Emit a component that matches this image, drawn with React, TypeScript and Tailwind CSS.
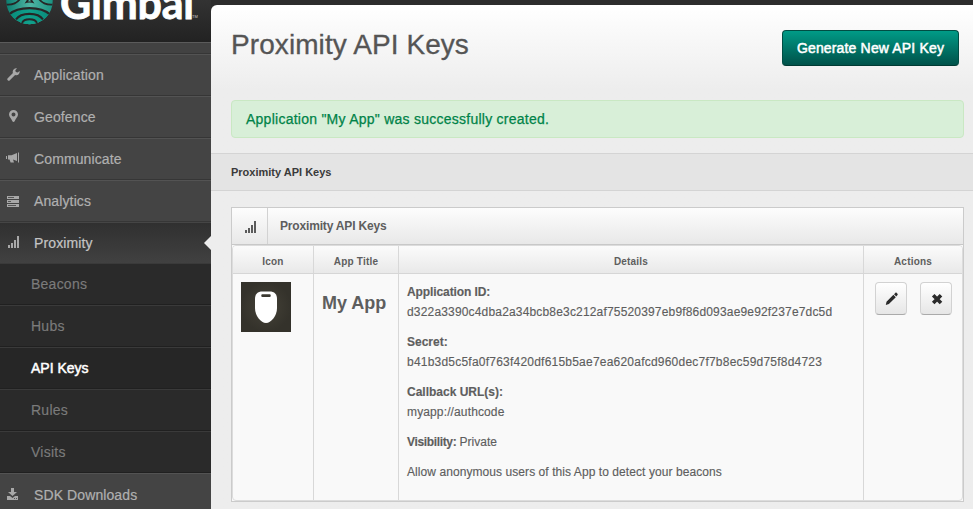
import type { ReactNode } from "react";

function Wrench() {
  return (
    <svg width="13" height="13" viewBox="0 0 13 13" fill="none">
      <path d="M1.800 11.200 7 6" stroke="#a8a8a8" strokeWidth="3" strokeLinecap="round" />
      <path d="M10 .3 8.300 2.200l.5 1.900 1.900.5L12.600 2.900c.5 2.200-1 4.300-3.300 4.300C7 7.200 5.500 5.500 5.700 3.600 5.900 1.400 8 -.3 10 .3Z" fill="#a8a8a8" />
    </svg>
  );
}

function Pin() {
  return (
    <svg width="12" height="14" viewBox="0 0 12 14">
      <path fillRule="evenodd" d="M6.500 1A4.500 4.500 0 0 1 11 5.500C11 8 8.500 9.500 7.600 12.300c-.4 1-1.800 1-2.200 0C4.500 9.500 2 8 2 5.500A4.500 4.500 0 0 1 6.500 1Zm0 2.500a2 2 0 1 0 0 4 2 2 0 0 0 0-4Z" fill="#a8a8a8" />
    </svg>
  );
}

function Megaphone() {
  return (
    <svg width="14" height="12" viewBox="0 0 14 12" fill="#a8a8a8" className="-ml-px">
      <path d="M0 4h1v3H0zM2 3.300h3.500L11 1v8L7 7.600l1 2.900H4.600L3.500 7.500H2zM12 .5h1v10h-1z" />
    </svg>
  );
}

function Servers() {
  return (
    <svg width="12" height="12" viewBox="0 0 12 12" className="mt-1">
      <path d="M0 0h12v3H0zM0 4h12v3H0zM0 8h12v3H0z" fill="#a8a8a8" />
      <path d="M1 1h6v1H1zM1 5h3v1H1zM1 9h8v1H1z" fill="#555" />
    </svg>
  );
}

function Bars({ color }: { color: string }) {
  return (
    <svg width="12" height="12" viewBox="0 0 12 12" fill={color}>
      <path d="M1 9h2v3H1zM4 7h2v5H4zM7 4h2v8H7zM10 0h2v12h-2z" />
    </svg>
  );
}

function Download() {
  return (
    <svg width="12" height="12" viewBox="0 0 12 12">
      <path d="M4 0h3v4h3L5.500 8 1 4h3zM0 8h3l2.500 2L8 8h3v4H0z" fill="#a8a8a8" />
      <path d="M7 10h1v1H7zM9 10h1v1H9z" fill="#555" />
    </svg>
  );
}

function Pencil() {
  return (
    <svg width="14" height="14" viewBox="0 0 14 14" fill="#2b2b2b" className="ml-0.5">
      <path d="m.8 12.900.7-3.200 6.900-6.900 2.400 2.400L3.900 12.100zM9 2.200l1.300-1.300c.4-.4 1-.4 1.400 0l.8.8c.4.4.4 1 0 1.400l-1.200 1.400z" />
    </svg>
  );
}

function Cross() {
  return (
    <svg width="12" height="12" viewBox="0 0 12 12" className="ml-px">
      <path d="m2.200 2.200 7.800 7.800M10 2.200 2.200 10" stroke="#2b2b2b" strokeWidth="3.600" />
    </svg>
  );
}

function Logo() {
  return (
    <svg width="50" height="26" viewBox="0 0 50 26" className="shrink-0">
      <defs>
        <linearGradient id="orb" x1="0" x2="1">
          <stop offset="0" stopColor="#087b6d" />
          <stop offset=".5" stopColor="#4fb5a4" />
          <stop offset="1" stopColor="#16907f" />
        </linearGradient>
        <linearGradient id="orbLow" x1="0" x2="1">
          <stop offset="0" stopColor="#0a8c7b" />
          <stop offset=".5" stopColor="#0fa08c" />
          <stop offset="1" stopColor="#0a8c7b" />
        </linearGradient>
        <clipPath id="ball">
          <circle cx="24.500" cy="1" r="23.200" />
        </clipPath>
      </defs>
      <g clipPath="url(#ball)">
        <rect width="50" height="26" fill="url(#orb)" />
        <path d="M5 14Q24 4 44 14v12H5z" fill="url(#orbLow)" />
        <g fill="none" stroke="#262626">
          <path d="M0 4.500C8 5.500 12 3 15-1M49 4.500C41 5.500 37 3 34-1" strokeWidth="1.800" />
          <path d="M4 14.500C13 6 36 6 45 14.500" strokeWidth="2.200" />
          <path d="M11 19.500c5-7.500 22-7.500 27 0" strokeWidth="2.200" />
          <path d="M17 23c2-5 13-5 15 0" strokeWidth="2" />
        </g>
        <path d="M19.500 3.500 22.500-1h4l3 4.500c-3-1.500-7-1.500-10 0z" fill="#262626" />
        <path d="M23 1.500 24.500-1 26 1.500z" fill="#48b09f" />
      </g>
    </svg>
  );
}

function NavItem({ icon, label, active, last }: { icon: ReactNode; label: string; active?: boolean; last?: boolean }) {
  return (
    <div
      className={
        active
          ? "relative flex h-[41px] shrink-0 items-center border-t border-[#454545] bg-linear-to-b from-[#303030] to-[#414141] text-[#c4c4c4]"
          : "flex h-[42px] shrink-0 items-center border-t border-b border-t-[#535353] border-b-[#363636] bg-[#444] text-[#b0b0b0]"
      }
    >
      <span className={last ? "flex w-[34px] shrink-0 pl-[7px]" : "flex w-[34px] shrink-0 pb-0.5 pl-[7px]"}>{icon}</span>
      <span
        className={
          last
            ? "pt-0.5 text-[14px] tracking-[0.1px] [-webkit-text-stroke:0.2px_currentColor]"
            : "text-[14px] tracking-[0.12px] [-webkit-text-stroke:0.2px_currentColor]"
        }
      >
        {label}
      </span>
      {active && (
        <svg className="absolute top-3 right-0" width="7" height="16" viewBox="0 0 7 16">
          <path d="M7 1v14L0 8z" fill="#ededed" />
        </svg>
      )}
    </div>
  );
}

function SubItem({ label, active }: { label: string; active?: boolean }) {
  return (
    <div
      className={
        active
          ? "flex h-[42px] shrink-0 items-center border-t border-b border-t-[#3a3a3a] border-b-[#202020] bg-[#262626] pl-[31px] text-white [-webkit-text-stroke:0.5px_white]"
          : "flex h-[42px] shrink-0 items-center border-t border-b border-t-[#3a3a3a] border-b-[#202020] bg-[#2a2a2a] pl-[31px] text-[#7b7b7b] [-webkit-text-stroke:0.15px_currentColor]"
      }
    >
      <span className={active ? "text-[14px]" : "text-[14px] tracking-[0.24px]"}>{label}</span>
    </div>
  );
}

function ActionButton({ children }: { children: ReactNode }) {
  return (
    <button className="flex h-[33px] w-8 items-center justify-center rounded-[4px] border border-[#d2d2d2] border-b-[#aaa] bg-linear-to-b from-white to-[#e6e6e6]">
      {children}
    </button>
  );
}

const HEAD = "flex h-full items-center justify-center pt-1";

export default function App() {
  return (
    <div className="flex h-[509px] w-[973px] overflow-hidden bg-[#2d2d2d] font-['Liberation_Sans',Arial,sans-serif]">
      <aside className="flex w-[211px] shrink-0 flex-col bg-[#444]">
        <div className="flex h-[42px] shrink-0 overflow-hidden bg-linear-to-b from-[#333] to-[#222] pl-[5px]">
          <Logo />
          <span className="-mt-[27px] ml-[5px] h-[60px] w-[132px] shrink-0 font-[Lato] text-[43px] leading-[60px] font-bold tracking-[-0.2px] text-white [-webkit-text-stroke:0.8px_white]">
            Gimbal
          </span>
          <span className="mt-[14px] text-[4px] leading-[6px] text-[#ccc]">TM</span>
        </div>
        <div className="h-3 shrink-0 border-t border-b border-t-[#5b5b5b] border-b-[#363636] bg-[#424242]" />
        <NavItem icon={<Wrench />} label="Application" />
        <NavItem icon={<Pin />} label="Geofence" />
        <NavItem icon={<Megaphone />} label="Communicate" />
        <NavItem icon={<Servers />} label="Analytics" />
        <NavItem icon={<Bars color="#a8a8a8" />} label="Proximity" active />
        <SubItem label="Beacons" />
        <SubItem label="Hubs" />
        <SubItem label="API Keys" active />
        <SubItem label="Rules" />
        <SubItem label="Visits" />
        <NavItem icon={<Download />} label="SDK Downloads" last />
      </aside>

      <main className="mt-[5px] flex min-w-0 flex-1 flex-col rounded-tl-[6px] bg-[#ededed] bg-linear-to-b from-white to-[#ededed] to-[84px] text-[#5e5e5e]">
        <div className="flex h-[95px] shrink-0 justify-between pr-[14px] pl-5">
          <h1 className="mt-[22px] text-[28px] leading-9 tracking-[0.08px] text-[#555] [-webkit-text-stroke:0.3px_#555]">Proximity API Keys</h1>
          <button className="mt-[25px] flex h-9 w-[177px] items-center justify-center rounded-[4px] border border-[#004d43] border-b-[#003a33] bg-linear-to-b from-[#009b87] to-[#00524a] text-[14px] tracking-[0.16px] text-white [-webkit-text-stroke:0.5px_white]">
            Generate New API Key
          </button>
        </div>
        <div className="mr-[9px] ml-5 flex h-[38px] shrink-0 items-center rounded-[4px] border border-[#c9e8c3] bg-[#d8efd8] pl-[14px] text-[14px] tracking-[0.25px] text-[#008348] [-webkit-text-stroke:0.25px_#008348]">
          Application "My App" was successfully created.
        </div>
        <div className="mt-[15px] flex h-[38px] shrink-0 items-center border-t border-b border-[#d4d4d4] bg-[#e4e4e4] pl-5 text-[11px] font-bold text-[#3a3a3a]">
          Proximity API Keys
        </div>

        <section className="mt-4 mr-[9px] ml-5 flex h-[295px] shrink-0 flex-col border border-[#cbcbcb] bg-[#f9f9f9]">
          <div className="flex h-[37px] shrink-0 border-b border-[#c8c8c8] bg-linear-to-b from-[#fdfdfd] to-[#e8e8e8]">
            <div className="flex w-9 items-center justify-center border-r border-[#d2d2d2] pt-0.5">
              <Bars color="#5b5b5b" />
            </div>
            <h2 className="pt-[9px] pl-3 text-[12px] leading-[18px] font-bold tracking-[-0.17px]">Proximity API Keys</h2>
          </div>
          <div className="flex min-h-0 flex-1 flex-col overflow-hidden rounded-[4px] border border-[#dcdcdc]">
            <div className="grid h-[28px] shrink-0 grid-cols-[81px_85px_465px_1fr] border-b border-[#d6d6d6] bg-linear-to-b from-[#fbfbfb] to-[#e9e9e9] text-[10px] font-bold tracking-[0.2px]">
              <div className={HEAD + " border-r border-[#d8d8d8]"}>Icon</div>
              <div className={HEAD + " border-r border-[#d8d8d8]"}>App Title</div>
              <div className={HEAD + " border-r border-[#d8d8d8]"}>Details</div>
              <div className={HEAD}>Actions</div>
            </div>
            <div className="grid flex-1 grid-cols-[81px_85px_465px_1fr] text-[12px] leading-5">
              <div className="border-r border-[#d8d8d8] pt-2 pl-2">
                <svg width="50" height="50" viewBox="0 0 50 50">
                  <defs>
                    <radialGradient id="tile">
                      <stop offset="0" stopColor="#454238" />
                      <stop offset="1" stopColor="#34322b" />
                    </radialGradient>
                  </defs>
                  <rect width="50" height="50" fill="url(#tile)" />
                  <path d="M14 17c0-5 2.500-7.500 7.500-7.500h7c5 0 7.500 2.500 7.500 7.500v9c0 8-6 15-11 15S14 34 14 26z" fill="#fff" />
                  <rect x="20.300" y="12.300" width="9.400" height="2.800" rx="1" fill="#3b3931" />
                </svg>
              </div>
              <div className="border-r border-[#d8d8d8] pt-[19px] pl-2 text-[18px] font-bold">My App</div>
              <div className="flex flex-col gap-[10px] border-r border-[#d8d8d8] pt-2 pl-2 [-webkit-text-stroke:0.15px_currentColor]">
                <p><b className="tracking-[-0.1px]">Application ID:</b><br /><span className="tracking-[0.17px]">d322a3390c4dba2a34bcb8e3c212af75520397eb9f86d093ae9e92f237e7dc5d</span></p>
                <p><b>Secret:</b><br /><span className="tracking-[0.22px]">b41b3d5c5fa0f763f420df615b5ae7ea620afcd960dec7f7b8ec59d75f8d4723</span></p>
                <p><b>Callback URL(s):</b><br /><span className="tracking-[0.13px]">myapp://authcode</span></p>
                <p><b className="tracking-[-0.35px]">Visibility:</b> Private</p>
                <p className="tracking-[0.07px]">Allow anonymous users of this App to detect your beacons</p>
              </div>
              <div className="flex gap-[13px] pt-2 pl-[11px]">
                <ActionButton><Pencil /></ActionButton>
                <ActionButton><Cross /></ActionButton>
              </div>
            </div>
          </div>
        </section>
      </main>
    </div>
  );
}
